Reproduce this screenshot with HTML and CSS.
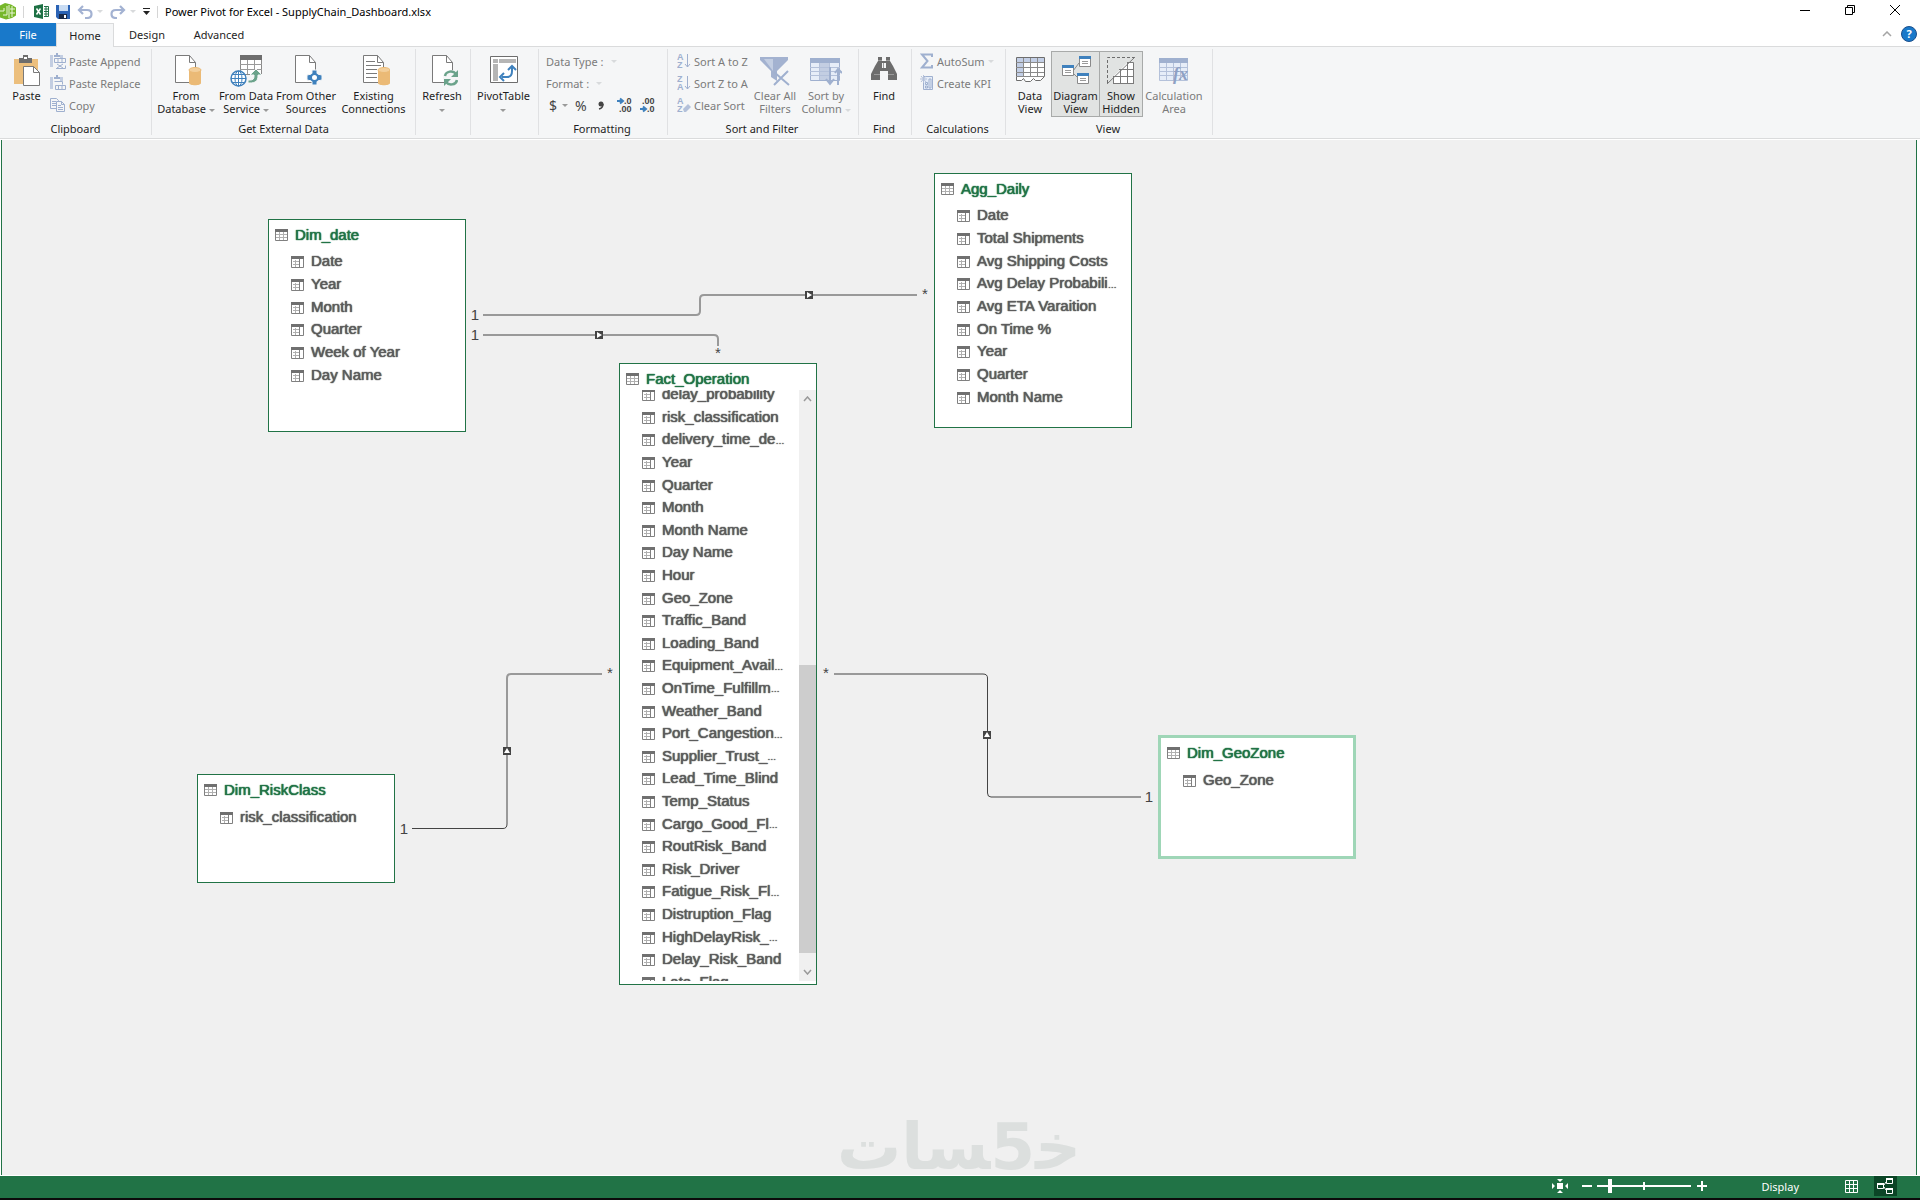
FILE: index.html
```html
<!DOCTYPE html>
<html lang="en">
<head>
<meta charset="utf-8">
<title>Power Pivot for Excel - SupplyChain_Dashboard.xlsx</title>
<link rel="stylesheet" href="styles.css">
</head>
<body>
<header class="titlebar">
  <svg class="app-logo" width="17" height="17" viewBox="0 0 17 17"><path d="M0 2.500 5 0l6 1.500 5 3v8l-4 2.500-6 1.500-6-2z" fill="#76b72a"/><path d="M0 8h4V5M7 3v9H3M9 2v13M10 6h5M10 10h5M12 3v11" fill="none" stroke="#e9f5d8" stroke-width="1"/></svg>
  <span class="bar-sep"></span>
  <svg width="16" height="15" viewBox="0 0 16 15"><path d="M0 2 9 0v15L0 13z" fill="#1e7145"/><path d="m2.500 4.500 4 6M6.500 4.500l-4 6" stroke="#fff" stroke-width="1.500"/><path d="M10 2.500h4.500v10H10M10 5h4.500M10 7.500h4.500M10 10h4.500M12 2.500v10" fill="none" stroke="#1e7145"/></svg>
  <button class="qat save" aria-label="Save"><svg width="14" height="14" viewBox="0 0 14 14"><path d="M0 0h14v14H2l-2-2z" fill="#2b63b5"/><path d="M3 0h9v6H3z" fill="#c9dcf3"/><path d="M3 9h8v5H3z" fill="#1b2b48"/><path d="M8 10h2v3H8z" fill="#fff"/></svg></button>
  <button class="qat" aria-label="Undo"><svg width="16" height="14" viewBox="0 0 16 14"><path d="M2 5h8c3 0 4.500 1.500 4.500 4S13 13 10 13H8M6 1 2 5l4 4" fill="none" stroke="#a3b2d2" stroke-width="2.200"/></svg><i class="caret faint"></i></button>
  <button class="qat" aria-label="Redo"><svg width="16" height="14" viewBox="0 0 16 14"><path d="M14 5H6C3 5 1.500 6.500 1.500 9S3 13 6 13h1M10 1l4 4-4 4" fill="none" stroke="#a3b2d2" stroke-width="2.200"/></svg><i class="caret faint"></i></button>
  <button class="qat custom" aria-label="Customize toolbar"><svg width="7" height="7" viewBox="0 0 7 7"><path d="M0 0h7v1H0zM0 3h7L3.500 7z" fill="#222"/></svg></button>
  <span class="bar-sep"></span>
  <h1>Power Pivot for Excel - SupplyChain_Dashboard.xlsx</h1>
  <div class="window-controls">
    <button aria-label="Minimize"><svg width="10" height="10" viewBox="0 0 10 10"><path d="M0 5.500h10" stroke="#000"/></svg></button>
    <button aria-label="Restore"><svg width="10" height="10" viewBox="0 0 10 10"><path d="M.5 2.500h7v7h-7zM2.500 2V.5h7v7H8" fill="none" stroke="#000"/></svg></button>
    <button aria-label="Close"><svg width="10" height="10" viewBox="0 0 10 10"><path d="m0 0 10 10M10 0 0 10" stroke="#000"/></svg></button>
  </div>
</header>

<nav class="tabs">
  <button class="file">File</button>
  <button class="selected">Home</button>
  <button class="design">Design</button>
  <button class="advanced">Advanced</button>
  <div class="tab-tools">
    <button aria-label="Collapse ribbon"><svg width="10" height="6" viewBox="0 0 10 6"><path d="m1 5 4-4 4 4" fill="none" stroke="#a5a5a5" stroke-width="1.500"/></svg></button>
    <button class="help" aria-label="Help">?</button>
  </div>
</nav>

<section class="ribbon" aria-label="Home">
  <div class="group g-clipboard">
    <div class="tools">
      <button class="big"><svg width="28" height="32" viewBox="0 0 28 32"><path d="M1 4h24v25H1z" fill="#ecbf7d"/><path d="M6 8V3h4V0h5v3h4v5z" fill="#6d6d6d"/><path d="M11 2h3v2h-3z" fill="#fff"/><path d="M10.500 11.500h10l6 6v13h-16z" fill="#fff" stroke="#7a7a7a"/><path d="M20.500 11.500v6h6" fill="none" stroke="#7a7a7a"/></svg><span>Paste</span></button>
      <div class="stack">
        <button class="small" disabled><svg width="16" height="16" viewBox="0 0 16 16"><path d="M0 2h3v12H0zM10 2h3v3h-3z" fill="#c3cee2"/><path d="M4 2h2V0h2v2h2v2H4z" fill="#9fb0cf"/><path d="M4.500 5.500h11v4h-11zM8 5.500v4M12 5.500v4M6 15.500h9.500v-3M7 11l6 4M13 11l-6 4" fill="none" stroke="#9fb0cf"/></svg>Paste Append</button>
        <button class="small" disabled><svg width="16" height="16" viewBox="0 0 16 16"><path d="M0 2h3v12H0zM10 2h3v4h-3z" fill="#c3cee2"/><path d="M4 2h2V0h2v2h2v2H4z" fill="#9fb0cf"/><path d="M4.500 6.500h8v3M5.500 10.500h10v4h-10zM8.500 10v4M12 10v4" fill="none" stroke="#9fb0cf"/></svg>Paste Replace</button>
        <button class="small" disabled><svg width="16" height="16" viewBox="0 0 16 16"><path d="M.5 1.500h6l2 2v8h-8zM2 4.500h4M2 6.500h4M2 8.500h4" fill="none" stroke="#9fb0cf"/><path d="M6.500 4.500h5l3 3v7h-8z" fill="#f5f6f7" stroke="#9fb0cf"/><path d="M11.500 4.500v3h3M8 8.500h3M8 10.500h5M8 12.500h5" fill="none" stroke="#9fb0cf"/></svg>Copy</button>
      </div>
    </div>
    <h2>Clipboard</h2>
  </div>

  <div class="group g-external">
    <div class="tools">
      <button class="big w62"><svg width="32" height="32" viewBox="0 0 32 32"><path d="M5.500.5h14l6 7v20h-20z" fill="#fff" stroke="#7a7a7a"/><path d="M19.500.5v7h6" fill="none" stroke="#7a7a7a"/><path d="M19 15v13c0 3 12 3 12 0V15z" fill="#ebba76"/><ellipse cx="25" cy="15" rx="6" ry="2.500" fill="#f3cf9b" stroke="#ebba76"/></svg><span>From<br>Database <i class="caret"></i></span></button>
      <button class="big w58"><svg width="32" height="32" viewBox="0 0 32 32"><path d="M10.500 1.500h21v18h-21z" fill="#fff" stroke="#8a8a8a"/><path d="M10 0h22v5H10z" fill="#6d6d6d"/><path d="M10 9.500h22M10 14.500h22M17.500 5v14M24.500 5v14" stroke="#9a9a9a"/><circle cx="8.500" cy="23.500" r="7.500" fill="#fff" stroke="#3f81bd" stroke-width="1.500"/><path d="M1 23.500h15M2 19.500h13M2 27.500h13M8.500 16v15" stroke="#3f81bd"/><ellipse cx="8.500" cy="23.500" rx="3.500" ry="7.500" fill="none" stroke="#3f81bd"/><path d="M18 25h2c3 0 4-1 4-4v-1h-4l6-6 6 6h-4v1c0 5-3 7-8 7h-2z" fill="#6ba38b" stroke="#f5f6f7"/></svg><span>From Data<br>Service <i class="caret"></i></span></button>
      <button class="big w62"><svg width="32" height="32" viewBox="0 0 32 32"><path d="M5.500.5h14l6 7v20h-20z" fill="#fff" stroke="#7a7a7a"/><path d="M19.500.5v7h6" fill="none" stroke="#7a7a7a"/><path d="M22 15h5v4l5 1v5l-5 1v4h-5v-4l-5-1v-5l5-1z" fill="#3f81bd" stroke="#f5f6f7"/><circle cx="24.500" cy="22.500" r="3.500" fill="#fff" stroke="#3f81bd" stroke-width="2"/></svg><span>From Other<br>Sources</span></button>
      <button class="big w73"><svg width="32" height="32" viewBox="0 0 32 32"><path d="M5.500.5h14l6 7v20h-20z" fill="#fff" stroke="#7a7a7a"/><path d="M19.500.5v7h6M8 6.500h9M8 10.500h15M8 14.500h11M8 18.500h11M8 22.500h11" fill="none" stroke="#7a7a7a"/><path d="M20 15v13c0 3 12 3 12 0V15z" fill="#ebba76"/><ellipse cx="26" cy="15" rx="6" ry="2.500" fill="#f3cf9b" stroke="#ebba76"/></svg><span>Existing<br>Connections</span></button>
    </div>
    <h2>Get External Data</h2>
  </div>

  <div class="group g-refresh">
    <div class="tools">
      <button class="big"><svg width="32" height="32" viewBox="0 0 32 32"><path d="M6.500.5h14l6 7v20h-20z" fill="#fff" stroke="#7a7a7a"/><path d="M20.500.5v7h6" fill="none" stroke="#7a7a7a"/><circle cx="25" cy="23" r="8" fill="#f5f6f7"/><path d="M19 21c1-5 8-6 11-2M31 25c-1 5-8 6-11 2" fill="none" stroke="#6ba38b" stroke-width="2.500"/><path d="M32 15v7h-7zM18 31v-7h7z" fill="#6ba38b"/></svg><span>Refresh<br><i class="caret"></i></span></button>
    </div>
  </div>

  <div class="group g-pivot">
    <div class="tools">
      <button class="big"><svg width="28" height="32" viewBox="0 0 28 32"><path d="M.5 1.500h27v26H.5z" fill="#fff" stroke="#6d6d6d"/><path d="M3 4h5v4H3zM9 4h17v4H9zM3 9h5v17H3z" fill="#b5b5b5"/><path d="M12 22h5c3 0 5-2 5-6v-4M14 18l-4 4 4 4M18 15l4-4 4 4" fill="none" stroke="#3f81bd" stroke-width="2"/></svg><span>PivotTable<br><i class="caret"></i></span></button>
    </div>
  </div>

  <div class="group g-format">
    <div class="tools">
      <div class="stack">
        <button class="small" disabled>Data Type : <i class="caret faint"></i></button>
        <button class="small" disabled>Format : <i class="caret faint"></i></button>
        <div class="formats">
          <button>$<i class="caret"></i></button>
          <button>%</button>
          <button class="comma" aria-label="Thousands separator"><svg width="6" height="9" viewBox="0 0 6 9"><circle cx="3" cy="3" r="2.500" fill="#444"/><path d="M5 3q0 4-4 5" fill="none" stroke="#444" stroke-width="1.500"/></svg></button>
          <button aria-label="Increase decimal"><svg width="16" height="18" viewBox="0 -2 16 18"><path d="M0 3h5M3 .5 6 3 3 5.500" fill="none" stroke="#3f81bd" stroke-width="2"/><text x="7" y="6">.0</text><text x="2" y="14">.00</text></svg></button>
          <button aria-label="Decrease decimal"><svg width="16" height="18" viewBox="0 -2 16 18"><text x="2" y="6">.00</text><path d="M0 11h5M3 8.500 6 11l-3 2.500" fill="none" stroke="#3f81bd" stroke-width="2"/><text x="7" y="14">.0</text></svg></button>
        </div>
      </div>
    </div>
    <h2>Formatting</h2>
  </div>

  <div class="group g-sort">
    <div class="tools">
      <div class="stack">
        <button class="small" disabled><svg width="14" height="18" viewBox="0 -1 14 18"><text x="0" y="7">A</text><text x="0" y="15">Z</text><path d="M10.500 1v13M8 11l2.500 3 2.500-3" fill="none" stroke="#9fb0cf"/></svg>Sort A to Z</button>
        <button class="small" disabled><svg width="14" height="18" viewBox="0 -1 14 18"><text x="0" y="7">Z</text><text x="0" y="15">A</text><path d="M10.500 1v13M8 11l2.500 3 2.500-3" fill="none" stroke="#9fb0cf"/></svg>Sort Z to A</button>
        <button class="small" disabled><svg width="14" height="18" viewBox="0 -1 14 18"><text x="0" y="7">A</text><text x="0" y="15">Z</text><path d="m6 12 5-5 3 3-5 5H7z" fill="#b4c1da"/></svg>Clear Sort</button>
      </div>
      <button class="big w44" disabled><svg width="30" height="32" viewBox="0 0 30 32"><path d="M0 2h28v3L17 16v10l-6-4v-6L0 5z" fill="#a3b2d0"/><path d="M4 4h9v12z" fill="#c3cee2"/><path d="m14 17 15 13M28 16 14 30" stroke="#9fb0cf" stroke-width="2"/></svg><span>Clear All<br>Filters</span></button>
      <button class="big w58" disabled><svg width="32" height="32" viewBox="0 0 32 32"><path d="M.5 3.500h29v22H.5z" fill="#e6edf8" stroke="#9fb0cf"/><path d="M0 3h30v5H0z" fill="#9fb0cf"/><path d="M10 8h9v17h-9z" fill="#c3cee2"/><path d="M0 12.500h30M0 16.500h30M0 20.500h30M9.500 8v17M19.500 8v17" stroke="#b4c1da"/><path d="M20 12v17M16 24l4 5 4-5M28 30V14M25 18l3-4 4 4" fill="none" stroke="#9fb0cf" stroke-width="2"/></svg><span>Sort by<br>Column <i class="caret faint"></i></span></button>
    </div>
    <h2>Sort and Filter</h2>
  </div>

  <div class="group g-find">
    <div class="tools">
      <button class="big"><svg width="26" height="32" viewBox="0 0 26 32"><path d="M7 2h4v4h4V2h4v4l3 5 4 8v6h-9v-9h-8v9H0v-6l4-8 3-5z" fill="#6d6d6d"/><path d="M11 8h4v5h-4z" fill="#f5f6f7"/><path d="M12.500 8v5M7 5.500h4M15 5.500h4M3 19.500h6M17 19.500h6" stroke="#9a9a9a"/></svg><span>Find</span></button>
    </div>
    <h2>Find</h2>
  </div>

  <div class="group g-calc">
    <div class="tools">
      <div class="stack">
        <button class="small" disabled><svg width="14" height="16" viewBox="0 0 14 16"><path d="M12 4V1.500H2L7.500 8 2 14.500h10V12" fill="none" stroke="#9fb0cf" stroke-width="2"/></svg>AutoSum <i class="caret faint"></i></button>
        <button class="small" disabled><svg width="14" height="16" viewBox="0 0 14 16"><path d="M3.500 1.500h9v13h-9z" fill="#e6edf8" stroke="#9fb0cf"/><path d="M5.500 7.500h2v2h-2zM5.500 11h2v2h-2zM9 4h2v9H9z" fill="none" stroke="#9fb0cf"/><path d="M0 4h7M3.500 0v8M1 1l5 6M6 1 1 7" stroke="#b4c1da"/></svg>Create KPI</button>
      </div>
    </div>
    <h2>Calculations</h2>
  </div>

  <div class="group g-view">
    <div class="tools">
      <button class="big data-view"><svg width="30" height="32" viewBox="0 0 30 32"><path d="M1.500 2.500h28v19l-4 4h-5l-2-2-3 3h-5l-2-3-2 2h-5z" fill="#fff" stroke="#6d6d6d"/><path d="M2 3h27v4H2zM2 7h6v15H2z" fill="#c3cfe6"/><path d="M1 7.500h28M1 12.500h28M1 17.500h28M1 21.500h28M8.500 3v19M15.500 3v19M22.500 3v19" stroke="#8a8a8a"/></svg><span>Data<br>View</span></button>
      <button class="big on w49" aria-pressed="true"><svg width="30" height="32" viewBox="0 0 30 32"><path d="m12 16 6-8M12 18l5 5" stroke="#8a8a8a"/><path d="M18.500 1.500h11v10h-11zM1.500 10.500h11v10h-11zM16.500 18.500h11v10h-11z" fill="#fff" stroke="#8a8a8a"/><path d="M18 1h12v3H18zM1 10h12v3H1zM16 18h12v3H16z" fill="#3f81bd"/><path d="M21 6.500h6M21 8.500h6M4 15.500h6M4 17.500h6M19 23.500h6M19 25.500h6" stroke="#9a9a9a"/></svg><span>Diagram<br>View</span></button>
      <button class="big on w43" aria-pressed="true"><svg width="30" height="32" viewBox="0 0 30 32"><path d="M1.500 28V2.500H28" fill="none" stroke="#6d6d6d" stroke-dasharray="3 2"/><path d="m7 22 14-14h6v20H7z" fill="#fff"/><path d="M7.500 22v6.500h20v-21H21M7 28.500h21M7 21.500h21M13 14.500h15M14.500 15v13M21.500 8v20M1 29 29 2" fill="none" stroke="#7a7a7a"/></svg><span>Show<br>Hidden</span></button>
      <button class="big w62" disabled><svg width="32" height="32" viewBox="0 0 32 32"><path d="M1.500 3.500h28v22h-28z" fill="#e6edf8" stroke="#b4c1da"/><path d="M1 3h29v5H1z" fill="#9fb0cf"/><path d="M1 12.500h28M1 16.500h28M1 20.500h28M8.500 8v17M15.500 8v17M22.500 8v17" stroke="#b4c1da"/><text class="fx" x="15" y="25">fx</text></svg><span>Calculation<br>Area</span></button>
    </div>
    <h2>View</h2>
  </div>
</section>

<main class="canvas">
  <div class="watermark" lang="ar" dir="rtl"><span>خ&zwj;</span><span>5</span><span>&zwj;سات</span></div>

  <svg class="links" width="1914" height="1034" viewBox="2 140 1914 1034">
    <g class="wide">
      <path d="M483 315H696Q700 315 700 311V299Q700 295 704 295H917"/>
      <path d="M483 335H714Q718 335 718 339V346"/>
      <path d="M507 751V678Q507 674 511 674H602"/>
      <path d="M834 674H983"/>
      <path d="M991 797H1141"/>
    </g>
    <g class="thin">
      <path d="M412 828.500H503Q507 828.500 507 824V751M983 674Q987.500 674 987.500 678V793Q987.500 797 991 797"/>
    </g>
    <g class="marks">
      <path class="box" d="M805 291h8v8h-8zM595 331h8v8h-8zM503 747h8v8h-8zM983 731h8v8h-8z"/>
      <path class="tip" d="m807 292 5 3-5 3zM597 332l5 3-5 3zM504 753l3-5 3 5zM984 737l3-5 3 5z"/>
    </g>
    <g class="ends">
      <text x="475" y="320">1</text><text x="475" y="340">1</text><text x="404" y="834">1</text><text x="1149" y="802">1</text>
      <text x="925" y="299">*</text><text x="718" y="358">*</text><text x="610" y="678">*</text><text x="826" y="678">*</text>
    </g>
  </svg>

  <article class="node dim-date">
    <h3>Dim_date</h3>
    <ul class="six">
      <li>Date</li><li>Year</li><li>Month</li><li>Quarter</li><li>Week of Year</li><li>Day Name</li>
    </ul>
  </article>

  <article class="node agg-daily">
    <h3>Agg_Daily</h3>
    <ul class="nine">
      <li>Date</li><li>Total Shipments</li><li>Avg Shipping Costs</li><li>Avg Delay Probabili<i>…</i></li><li>Avg ETA Varaition</li><li>On Time %</li><li>Year</li><li>Quarter</li><li>Month Name</li>
    </ul>
  </article>

  <article class="node fact">
    <h3>Fact_Operation</h3>
    <div class="scroller">
      <ul>
        <li>delay_probability</li><li>risk_classification</li><li>delivery_time_de<i>…</i></li><li>Year</li><li>Quarter</li><li>Month</li><li>Month Name</li><li>Day Name</li><li>Hour</li><li>Geo_Zone</li><li>Traffic_Band</li><li>Loading_Band</li><li>Equipment_Avail<i>…</i></li><li>OnTime_Fulfillm<i>…</i></li><li>Weather_Band</li><li>Port_Cangestion<i>…</i></li><li>Supplier_Trust_<i>…</i></li><li>Lead_Time_Blind</li><li>Temp_Status</li><li>Cargo_Good_Fl<i>…</i></li><li>RoutRisk_Band</li><li>Risk_Driver</li><li>Fatigue_Risk_Fl<i>…</i></li><li>Distruption_Flag</li><li>HighDelayRisk_<i>…</i></li><li>Delay_Risk_Band</li><li>Late_Flag</li>
      </ul>
      <div class="scrollbar">
        <svg width="9" height="6" viewBox="0 0 9 6"><path d="m1 5 3.500-4L8 5" fill="none" stroke="#9a9a9a" stroke-width="1.500"/></svg>
        <span class="thumb"></span>
        <svg width="9" height="6" viewBox="0 0 9 6"><path d="m1 1 3.500 4L8 1" fill="none" stroke="#9a9a9a" stroke-width="1.500"/></svg>
      </div>
    </div>
  </article>

  <article class="node risk-class">
    <h3>Dim_RiskClass</h3>
    <ul class="one"><li>risk_classification</li></ul>
  </article>

  <article class="node geo-zone">
    <h3>Dim_GeoZone</h3>
    <ul class="one"><li>Geo_Zone</li></ul>
  </article>
</main>

<footer class="status">
  <button aria-label="Fit to screen"><svg width="16" height="16" viewBox="0 0 16 16"><path d="M5 5h6v6H5zM5 1h6L8 4zM5 15h6l-3-3zM0 5v6l3-3zM16 5v6l-3-3z" fill="#fff"/></svg></button>
  <button class="zoom-out" aria-label="Zoom out"><svg width="10" height="10" viewBox="0 0 10 10"><path d="M0 5h10" stroke="#fff" stroke-width="2"/></svg></button>
  <input type="range" aria-label="Zoom" min="0" max="100" value="12">
  <button class="zoom-in" aria-label="Zoom in"><svg width="10" height="10" viewBox="0 0 10 10"><path d="M0 5h10M5 0v10" stroke="#fff" stroke-width="2"/></svg></button>
  <span class="display">Display</span>
  <button aria-label="Data view"><svg width="13" height="13" viewBox="0 0 13 13"><path d="M.5.5h12v12H.5zM4.500 0v13M8.500 0v13M0 4.500h13M0 8.500h13" fill="none" stroke="#fff"/></svg></button>
  <button class="active" aria-label="Diagram view"><svg width="17" height="16" viewBox="0 0 17 16"><path d="M.5 5.500h6v5h-6zM9.500.5h6v5h-6zM9.500 10.500h6v5h-6z" fill="none" stroke="#fff"/><path d="M0 5h7v2H0zM9 0h7v2H9zM9 10h7v2H9z" fill="#fff"/><path d="m7 7 2-3M7 9l2 3" stroke="#fff"/></svg></button>
</footer>
</body>
</html>
```
FILE: styles.css
```css
* { box-sizing: border-box; }

body {
  margin: 0;
  height: 100vh;
  display: flex;
  flex-direction: column;
  overflow: hidden;
  background: #fff;
  border-bottom: 2px solid #0b0b0b;
  color: #1e1e1e;
  font: 11px/13px "Noto Sans", "Open Sans", sans-serif;
}

h1, h2, h3, ul { margin: 0; padding: 0; font-weight: normal; }
ul { list-style: none; }
svg { display: block; flex: none; }

button {
  margin: 0;
  padding: 0;
  border: 0;
  background: none;
  color: inherit;
  font: inherit;
}
button:disabled { color: #7b7b7b; }

.caret {
  display: inline-block;
  vertical-align: middle;
  border: 3px solid transparent;
  border-top-color: #9a9a9a;
  border-bottom: 0;
}
.caret.faint { border-top-color: #d8dadc; }

/* title bar */
.titlebar { display: flex; align-items: center; height: 23px; flex: none; }
.app-logo { margin-right: 6px; }
.bar-sep { width: 1px; height: 12px; background: #d5d5d5; margin-right: 10px; }
.bar-sep + h1 { margin-left: -3px; }
.qat { display: flex; align-items: center; gap: 4px; margin-right: 7px; }
.save { margin: 0 7px 0 6px; }
.custom { margin-right: 7px; }
h1 { font-size: 11px; line-height: 16px; color: #000; }
.window-controls { display: flex; align-self: flex-start; margin-left: auto; margin-right: 3px; }
.window-controls button { width: 45px; height: 20px; display: grid; place-items: center; }

/* tabs */
.tabs {
  display: flex;
  height: 24px;
  flex: none;
  border-bottom: 1px solid #dadbdc;
}
.tabs > button { height: 23px; }
.tabs .file { width: 56px; background: #1979ca; color: #fff; }
.tabs .selected {
  width: 58px;
  height: 24px;
  background: #f5f6f7;
  border: 1px solid #dadbdc;
  border-bottom: 0;
}
.tabs .design { width: 66px; }
.tabs .advanced { width: 78px; }
.tab-tools { display: flex; align-items: center; gap: 9px; margin-left: auto; padding: 0 3px 2px 0; }
.tab-tools .help {
  width: 16px;
  height: 16px;
  border-radius: 50%;
  background: #1979ca;
  border: 1px solid #1b4f8c;
  color: #fff;
  font-weight: bold;
}

/* ribbon */
.ribbon {
  display: flex;
  height: 92px;
  flex: none;
  padding: 2px 0 3px;
  background: #f5f6f7;
  border-bottom: 1px solid #dadbdc;
}
.group {
  display: flex;
  flex-direction: column;
  flex: none;
  border-right: 1px solid #e0e1e3;
}
.g-external ~ .group { padding-right: 2px; }
.tools { display: flex; flex: 1; padding-top: 1px; }
.group h2 { font-size: 11px; line-height: 13px; text-align: center; }
.g-clipboard { width: 152px; }
.g-external { width: 264px; }
.g-refresh { width: 55px; }
.g-pivot { width: 68px; }
.g-format { width: 129px; }
.g-sort { width: 191px; }
.g-find { width: 53px; }
.g-calc { width: 94px; }
.g-view { width: 207px; }
.g-external .tools { padding-left: 3px; }

.big {
  display: flex;
  flex-direction: column;
  align-items: center;
  height: 66px;
  margin-top: 1px;
  padding-top: 4px;
  gap: 2px;
  white-space: nowrap;
}
.g-refresh .big, .g-pivot .big, .g-find .big { flex: 1; }
.g-clipboard .big { width: 50px; padding-left: 3px; }
.w43 { width: 43px; }
.w44 { width: 44px; }
.w49 { width: 49px; }
.w58 { width: 58px; }
.w62 { width: 62px; }
.w73 { width: 73px; }
.data-view { width: 45px; padding-left: 3px; }
.on { padding-top: 3px; background: #e1e3e2; border: 1px solid #a8aaa9; }
.on + .on { border-left: 0; }

.stack { display: flex; flex-direction: column; }
.small { display: flex; align-items: center; gap: 3px; height: 22px; white-space: nowrap; }
.small svg text { font: bold 9px "Liberation Sans", sans-serif; fill: #9fb0cf; }
.g-format .stack { padding-left: 7px; }
.g-sort .stack { width: 85px; padding-left: 9px; }
.g-calc .stack { padding-left: 8px; }
.g-format .small { gap: 7px; }

.formats { display: flex; align-items: center; height: 22px; gap: 7px; padding-left: 3px; color: #444; }
.formats button { display: flex; align-items: center; gap: 5px; font-size: 14px; }
.formats .comma { padding: 0 6px 0 4px; }
.formats text { font: bold 9px "Liberation Sans", sans-serif; fill: #444; }
.fx { font: italic bold 18px "Liberation Serif", serif; fill: #8fa1c4; }

/* diagram */
.canvas {
  position: relative;
  flex: 1;
  min-height: 0;
  margin: 1px 3px 1px 1px;
  overflow: hidden;
  background: #f0f0f0;
  border: solid #217346;
  border-width: 0 1px;
}
.watermark {
  position: absolute;
  inset: auto 0 0;
  display: flex;
  justify-content: center;
  color: #dcdfde;
  font: bold 64px/56px "DejaVu Sans", sans-serif;
}
.links { position: absolute; left: 0; top: 0; }
.wide path { fill: none; stroke: #999; stroke-width: 2; }
.thin path { fill: none; stroke: #444; stroke-width: 1; }
.box { fill: #444; }
.tip { fill: #fff; }
.ends text { font: 15px "Liberation Sans", Arial, sans-serif; fill: #444; text-anchor: middle; }

.node {
  position: absolute;
  width: 198px;
  display: flex;
  flex-direction: column;
  background: #fff;
  border: 1px solid #217346;
  color: #5c5c5c;
  font: 15px/22px "Liberation Sans", Arial, sans-serif;
  text-shadow: 0 0 1px #5c5c5c, 0 0 1px #5c5c5c;
}
.dim-date { left: 266px; top: 79px; height: 213px; }
.agg-daily { left: 932px; top: 33px; height: 255px; }
.fact { left: 617px; top: 223px; height: 622px; }
.risk-class { left: 195px; top: 634px; height: 109px; }
.geo-zone { left: 1156px; top: 595px; height: 124px; border: 3px solid #9fd6b7; }

.node h3 {
  display: flex;
  align-items: center;
  gap: 7px;
  height: 26px;
  flex: none;
  padding: 3px 0 0 6px;
  font-size: 15px;
  color: #217346;
  text-shadow: 0 0 1px #217346, 0 0 1px #217346;
}
.node h3::before, .node li::before {
  content: "";
  width: 13px;
  height: 12px;
  flex: none;
  background: url("data:image/svg+xml,%3Csvg xmlns='http://www.w3.org/2000/svg' width='13' height='12'%3E%3Cpath d='M.5 1.500h12v10H.5z' fill='%23fff' stroke='%23808080'/%3E%3Cpath d='M1 5.500h11M1 8.500h11M4.500 3v8M8.500 3v8' stroke='%23b0b0b0'/%3E%3Cpath d='M0 0h13v3H0z' fill='%23707070'/%3E%3C/svg%3E");
}
.node li::before {
  margin: 2px 7px 0 0;
  background-image: url("data:image/svg+xml,%3Csvg xmlns='http://www.w3.org/2000/svg' width='13' height='12'%3E%3Cpath d='M.5 1.500h12v10H.5z' fill='%23fff' stroke='%23808080'/%3E%3Cpath d='M2 5.500h7M2 8.500h7M4.500 4v7' stroke='%23b0b0b0'/%3E%3Cpath d='M8.500 3v8' stroke='%23808080'/%3E%3Cpath d='M0 0h13v3H0z' fill='%23707070'/%3E%3C/svg%3E");
}
.node ul { display: flex; flex-direction: column; margin-top: 4px; padding-left: 22px; }
.node li { display: flex; align-items: center; flex: 1; white-space: nowrap; }
.node li i { font-size: 9px; font-style: normal; align-self: end; line-height: 20px; }
.one { height: 23px; }
.six { height: 136px; }
.nine { height: 204px; }

.scroller { display: flex; height: 591px; overflow: hidden; }
.scroller ul { flex: 1; height: 610px; margin-top: -7px; }
.scrollbar {
  display: flex;
  flex-direction: column;
  align-items: center;
  justify-content: space-between;
  width: 17px;
  padding: 6px 0;
  background: #f0f0f0;
}
.thumb { width: 17px; height: 288px; margin: auto 0 8px; background: #cdcdcd; }
.scrollbar svg:last-child { margin-top: 8px; }

/* status bar */
.status {
  display: flex;
  align-items: center;
  justify-content: flex-end;
  height: 22px;
  flex: none;
  padding: 0 23px 2px 0;
  background: #217346;
  color: #fff;
}
.zoom-out { margin-left: 14px; }
.status input {
  appearance: none;
  width: 94px;
  height: 14px;
  margin: 0 6px 0 5px;
  background:
    linear-gradient(#fff, #fff) center / 2px 8px no-repeat,
    linear-gradient(#fff, #fff) center / 100% 2px no-repeat;
}
.status input::-webkit-slider-thumb { appearance: none; width: 4px; height: 14px; background: #fff; }
.display { margin: 0 46px 0 54px; }
.status .active { margin-left: 16px; padding: 2px 3px; height: 20px; background: #0b4526; }
```
